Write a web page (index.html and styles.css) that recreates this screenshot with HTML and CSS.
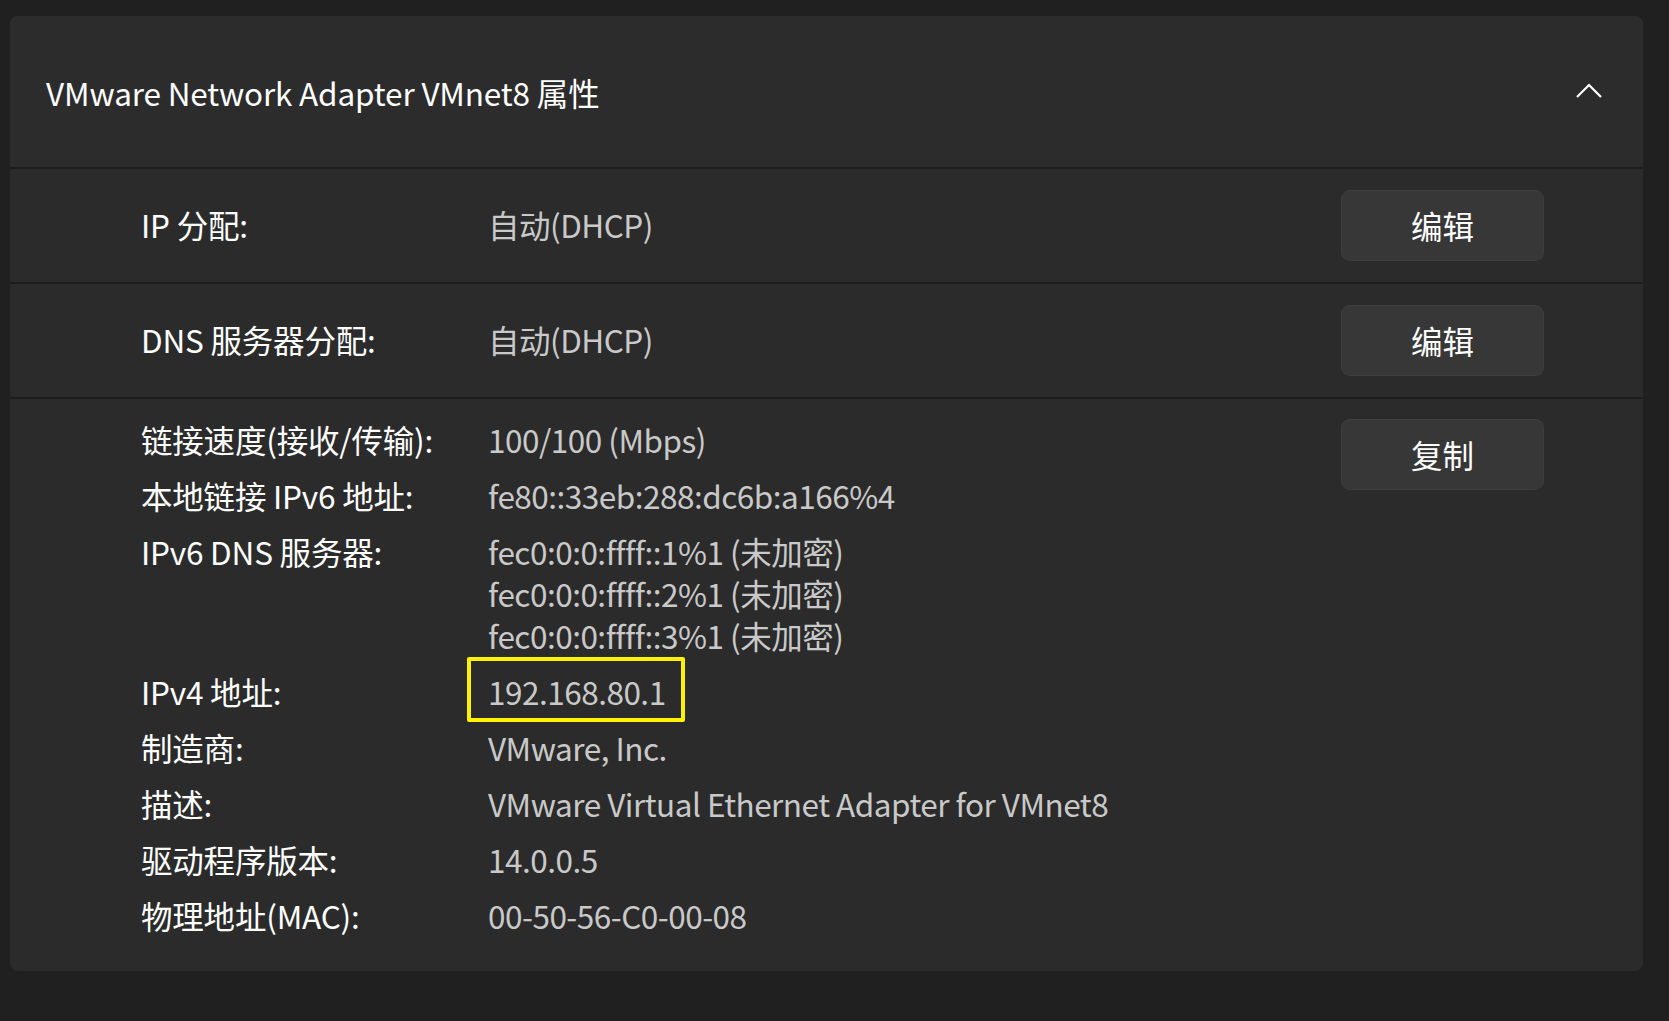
FILE: index.html
```html
<!DOCTYPE html>
<html lang="zh-CN">
<head>
<meta charset="utf-8">
<title>VMware Network Adapter VMnet8 属性</title>
<link rel="stylesheet" href="styles.css">
</head>
<body>
<div class="panel">
  <div class="header">
    <div class="title">VMware Network Adapter VMnet8 属性</div>
    <svg class="chevron" width="26" height="16" viewBox="0 0 26 16"><path d="M1 14 L13 2 L25 14" fill="none" stroke="#ffffff" stroke-width="2.2"/></svg>
  </div>
  <div class="row">
    <div class="label">IP 分配:</div>
    <div class="value">自动(DHCP)</div>
    <button class="btn">编辑</button>
  </div>
  <div class="row">
    <div class="label">DNS 服务器分配:</div>
    <div class="value">自动(DHCP)</div>
    <button class="btn">编辑</button>
  </div>
  <div class="details">
    <div class="list">
      <div class="label">链接速度(接收/传输):</div>
      <div class="value">100/100 (Mbps)</div>
      <div class="label">本地链接 IPv6 地址:</div>
      <div class="value">fe80::33eb:288:dc6b:a166%4</div>
      <div class="label">IPv6 DNS 服务器:</div>
      <div class="value">fec0:0:0:ffff::1%1 (未加密)<br>fec0:0:0:ffff::2%1 (未加密)<br>fec0:0:0:ffff::3%1 (未加密)</div>
      <div class="label">IPv4 地址:</div>
      <div class="value"><span class="mark">192.168.80.1</span></div>
      <div class="label">制造商:</div>
      <div class="value">VMware, Inc.</div>
      <div class="label">描述:</div>
      <div class="value">VMware Virtual Ethernet Adapter for VMnet8</div>
      <div class="label">驱动程序版本:</div>
      <div class="value">14.0.0.5</div>
      <div class="label">物理地址(MAC):</div>
      <div class="value">00-50-56-C0-00-08</div>
    </div>
    <button class="btn">复制</button>
  </div>
</div>
</body>
</html>
```
FILE: styles.css
```css
html, body {
  margin: 0;
  padding: 0;
  background: #202020;
}
body {
  padding: 16px 0 0 10px;
  font-family: "Noto Sans CJK SC", "Noto Sans", sans-serif;
  font-size: 31.5px;
  color: #ffffff;
  height: 1021px;
  box-sizing: border-box;
}
.panel {
  width: 1633px;
  background: #2b2b2b;
  border-radius: 8px;
  overflow: hidden;
}
.header {
  height: 151px;
  display: flex;
  align-items: center;
  justify-content: space-between;
  padding: 0 41px 0 36px;
  background: #2c2c2c;
}
.title {
  color: #ffffff;
  line-height: 42px;
  margin-top: 1px;
  letter-spacing: -0.15px;
}
.chevron {
  display: block;
  margin-top: -2px;
}
.row {
  height: 113px;
  border-top: 2px solid #1d1d1d;
  display: grid;
  grid-template-columns: 347px 1fr auto;
  align-items: center;
  padding: 0 99px 0 131px;
}
.row .label,
.row .value {
  margin-top: -3px;
}
.label {
  color: #ffffff;
  line-height: 42px;
  white-space: nowrap;
  letter-spacing: -0.2px;
}
.value {
  color: #c9c9c9;
  line-height: 42px;
  white-space: nowrap;
  letter-spacing: -0.5px;
}
.btn {
  width: 203px;
  height: 71px;
  background: #373737;
  border: 1px solid #3d3d3d;
  border-top-color: #404040;
  border-radius: 9px;
  color: #ffffff;
  font-family: "Noto Sans CJK SC", sans-serif;
  font-size: 31.5px;
  line-height: 1;
  padding: 0;
}
.details {
  border-top: 2px solid #1d1d1d;
  display: flex;
  justify-content: space-between;
  align-items: flex-start;
  padding: 20px 99px 32px 131px;
}
.list {
  display: grid;
  grid-template-columns: 347px 1fr;
  row-gap: 14px;
  margin-top: -1px;
  margin-bottom: 3px;
}
.mark {
  position: relative;
}
.mark::after {
  content: "";
  position: absolute;
  left: -21px;
  top: -11px;
  width: 218px;
  height: 65px;
  box-sizing: border-box;
  border: 4px solid #fff200;
  border-radius: 2px;
}
```
